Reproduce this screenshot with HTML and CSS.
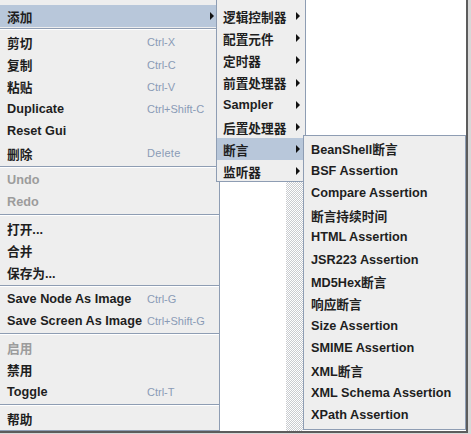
FILE: index.html
```html
<!DOCTYPE html>
<html lang="zh-CN">
<head>
<meta charset="utf-8">
<title>Menu</title>
<link rel="stylesheet" href="styles.css">
</head>
<body>
<div class="frame">
  <div class="splitter"></div>

  <div class="menu main-menu">
    <div class="item active"><span class="label">添加</span><span class="arrow"></span></div>
    <div class="sep"></div>
    <div class="item"><span class="label">剪切</span><span class="key">Ctrl-X</span></div>
    <div class="item"><span class="label">复制</span><span class="key">Ctrl-C</span></div>
    <div class="item"><span class="label">粘贴</span><span class="key">Ctrl-V</span></div>
    <div class="item"><span class="label">Duplicate</span><span class="key">Ctrl+Shift-C</span></div>
    <div class="item"><span class="label">Reset Gui</span></div>
    <div class="item"><span class="label">删除</span><span class="key spaced">Delete</span></div>
    <div class="sep"></div>
    <div class="item disabled"><span class="label">Undo</span></div>
    <div class="item disabled"><span class="label">Redo</span></div>
    <div class="sep"></div>
    <div class="item"><span class="label">打开...</span></div>
    <div class="item"><span class="label">合并</span></div>
    <div class="item"><span class="label">保存为...</span></div>
    <div class="sep"></div>
    <div class="item"><span class="label">Save Node As Image</span><span class="key">Ctrl-G</span></div>
    <div class="item"><span class="label">Save Screen As Image</span><span class="key">Ctrl+Shift-G</span></div>
    <div class="sep"></div>
    <div class="item disabled"><span class="label">启用</span></div>
    <div class="item"><span class="label">禁用</span></div>
    <div class="item"><span class="label">Toggle</span><span class="key">Ctrl-T</span></div>
    <div class="sep"></div>
    <div class="item"><span class="label">帮助</span></div>
  </div>

  <div class="menu sub-menu">
    <div class="item"><span class="label">逻辑控制器</span><span class="arrow"></span></div>
    <div class="item"><span class="label">配置元件</span><span class="arrow"></span></div>
    <div class="item"><span class="label">定时器</span><span class="arrow"></span></div>
    <div class="item"><span class="label">前置处理器</span><span class="arrow"></span></div>
    <div class="item"><span class="label">Sampler</span><span class="arrow"></span></div>
    <div class="item"><span class="label">后置处理器</span><span class="arrow"></span></div>
    <div class="item active"><span class="label">断言</span><span class="arrow"></span></div>
    <div class="item"><span class="label">监听器</span><span class="arrow"></span></div>
  </div>

  <div class="menu assert-menu">
    <div class="item"><span class="label">BeanShell断言</span></div>
    <div class="item"><span class="label">BSF Assertion</span></div>
    <div class="item"><span class="label">Compare Assertion</span></div>
    <div class="item"><span class="label">断言持续时间</span></div>
    <div class="item"><span class="label">HTML Assertion</span></div>
    <div class="item"><span class="label">JSR223 Assertion</span></div>
    <div class="item"><span class="label">MD5Hex断言</span></div>
    <div class="item"><span class="label">响应断言</span></div>
    <div class="item"><span class="label">Size Assertion</span></div>
    <div class="item"><span class="label">SMIME Assertion</span></div>
    <div class="item"><span class="label">XML断言</span></div>
    <div class="item"><span class="label">XML Schema Assertion</span></div>
    <div class="item"><span class="label">XPath Assertion</span></div>
  </div>
</div>
</body>
</html>
```

FILE: styles.css
```css
html, body {
  margin: 0;
  padding: 0;
  background: #d8d8d8;
}

body {
  width: 471px;
  height: 434px;
  overflow: hidden;
  font-family: "Liberation Sans", "Noto Sans CJK SC", sans-serif;
}

.frame {
  position: relative;
  box-sizing: border-box;
  width: 468px;
  height: 433px;
  background: #ffffff;
  border-right: 2px solid #5c5c5c;
  border-bottom: 2px solid #5c5c5c;
  overflow: hidden;
}

.splitter {
  position: absolute;
  left: 286px;
  top: 182px;
  width: 17px;
  bottom: 0;
  background: repeating-conic-gradient(#c9ccd0 0 25%, #ffffff 0 50%) 0 0 / 2px 2px;
}

.menu {
  position: absolute;
  box-sizing: border-box;
  background: #eeeeee;
  border: 1px solid #8e9db3;
}

.main-menu {
  left: 0;
  top: 0;
  width: 220px;
  height: 431px;
  border-top: none;
  border-left: none;
  padding-top: 5px;
}

.sub-menu {
  left: 216px;
  top: 0;
  width: 90px;
  height: 182px;
  border-top: none;
  padding-top: 5px;
}

.assert-menu {
  left: 303px;
  top: 135px;
  width: 163px;
  height: 295px;
  padding-top: 1.5px;
}

.item {
  display: flex;
  align-items: center;
  height: 22.2px;
  font-size: 12.7px;
  font-weight: bold;
  color: #1e1e1e;
  white-space: nowrap;
}

.main-menu .item {
  padding-left: 7px;
}

.sub-menu .item {
  padding-left: 6px;
  padding-right: 5px;
}

.assert-menu .item {
  padding-left: 7px;
}

.item.active {
  background: #b8c7da;
}

.item.disabled {
  color: #9c9c9c;
}

.main-menu .label {
  width: 140px;
  flex: none;
}

.key {
  font-size: 11px;
  font-weight: normal;
  color: #8a9bb6;
}

.key.spaced {
  letter-spacing: 0.3px;
}

.arrow {
  margin-left: auto;
  margin-right: 5px;
  width: 0;
  height: 0;
  border-top: 4px solid transparent;
  border-bottom: 4px solid transparent;
  border-left: 4px solid #111111;
}

.sub-menu .arrow {
  margin-right: 0;
}

.sep {
  height: 1px;
  margin: 1.1px 0 1.1px;
  border-top: 1px solid #8e9db3;
  background: #ffffff;
}
```
